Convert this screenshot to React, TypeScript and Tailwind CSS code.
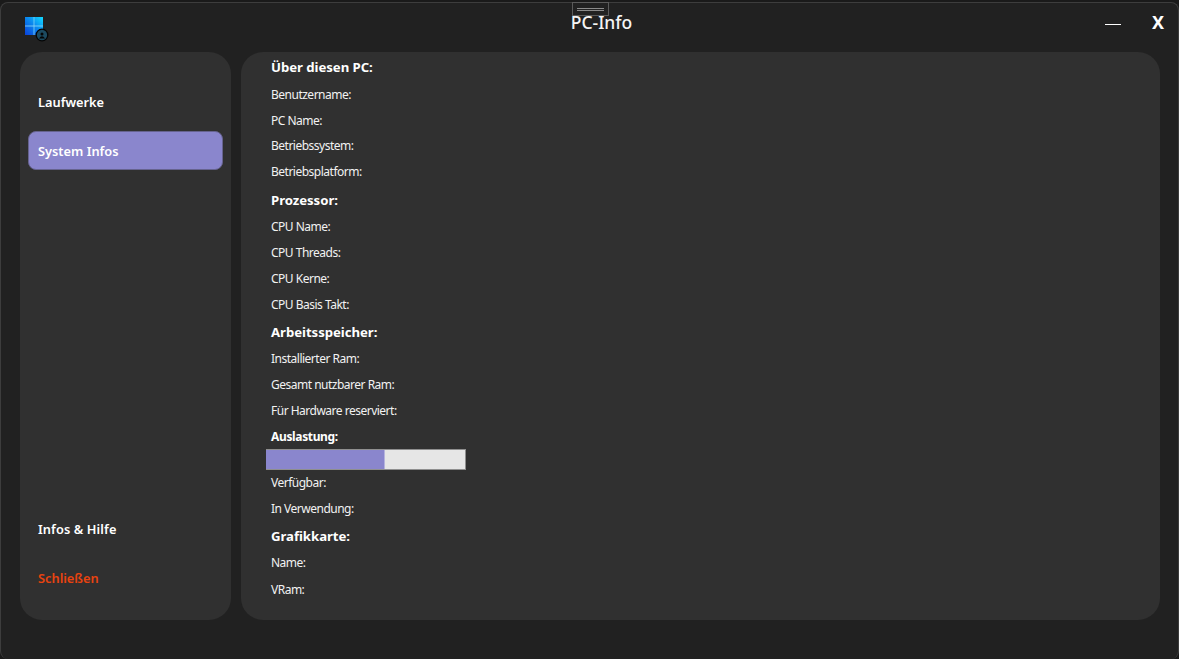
import React from "react";

const Head = ({ t, cls = "" }: { t: string; cls?: string }) => (
  <div className={`h-[26px] flex items-center text-[13.2px] font-bold tracking-[-0.05px] text-white ${cls}`}>{t}</div>
);
const Line = ({ t, cls = "h-[26px]" }: { t: string; cls?: string }) => (
  <div className={`flex items-center text-[12px] tracking-[-0.5px] text-[#f2f2f2] ${cls}`}>{t}</div>
);

const Logo = () => (
  <svg width="26" height="26" viewBox="0 0 26 26" className="block">
    <defs>
      <linearGradient id="w" x1="0" y1="1" x2="1" y2="0">
        <stop offset="0" stopColor="#0a3fd8" />
        <stop offset="0.55" stopColor="#0a8cf0" />
        <stop offset="1" stopColor="#12dcff" />
      </linearGradient>
    </defs>
    <rect x="1" y="1" width="18" height="18" fill="url(#w)" />
    <rect x="9.5" y="1" width="1" height="18" fill="#7fd4f5" opacity="0.8" />
    <rect x="1" y="9.5" width="18" height="1" fill="#8fd8f5" opacity="0.8" />
    <circle cx="18" cy="19" r="5.8" fill="#1c4a60" stroke="#050505" strokeWidth="1.3" />
    <circle cx="18" cy="18" r="1.5" fill="#050505" />
    <path d="M15 22.5 Q18 18 21 22.5 Z" fill="#050505" />
  </svg>
);

export default function App() {
  return (
    <div className="relative w-[1179px] h-[659px] overflow-hidden bg-[#1a1a1a] pt-[2px] font-['Noto_Sans','Open_Sans',sans-serif]">
      <div className="w-full h-[657px] rounded-[8px] border border-[#3d3d3d] border-b-0 bg-[#212121] flex flex-col">
        <div className="relative h-[49px] flex items-center shrink-0">
          <div className="absolute left-[23px] top-[13px]">
            <Logo />
          </div>
          <div className="absolute left-[571px] -top-px w-[37px] h-[14px] border border-[#5a5a5a] flex flex-col items-center justify-center gap-[1px]">
            <div className="w-[27px] h-px bg-[#8a8a8a]" />
            <div className="w-[27px] h-px bg-[#8a8a8a]" />
          </div>
          <div className="flex-1 text-center text-[17.5px] font-medium text-[#f5f5f5] pb-[12px] pl-[24px] pt-[2px]">PC-Info</div>
          <div className="absolute left-[1104px] top-[21px] w-[16px] h-px bg-white" />
          <div className="absolute left-[1151px] top-[6px] text-[18px] font-bold text-white">X</div>
        </div>
        <div className="flex gap-[10px] pl-[19px] h-[568px]">
          <aside className="w-[211px] h-full rounded-[22px] bg-[#303030] px-[8px] pt-[31px] pb-[22px] flex flex-col">
            <div className="h-[39px] pl-[10px] flex items-center text-[12.8px] font-semibold text-white">Laufwerke</div>
            <div className="mt-[9px] h-[39px] pl-[9px] pt-[2px] flex items-center rounded-[8px] bg-[#8a86cd] border border-[#66638f] text-[12.8px] font-semibold text-white">System Infos</div>
            <div className="mt-auto h-[39px] pl-[10px] flex items-center text-[12.8px] tracking-[0.1px] font-semibold text-white">Infos &amp; Hilfe</div>
            <div className="mt-[10px] h-[39px] pl-[10px] flex items-center text-[12.8px] font-semibold text-[#e8430f]">Schließen</div>
          </aside>
          <main className="w-[919px] h-full rounded-[22px] bg-[#303030] pl-[30px] pt-[3px] flex flex-col">
            <Head t="Über diesen PC:" />
            <div className="h-px" />
            <Line t="Benutzername:" />
            <Line t="PC Name:" cls="h-[25px]" />
            <Line t="Betriebssystem:" />
            <Line t="Betriebsplatform:" />
            <Head t="Prozessor:" cls="mt-[3px]" />
            <Line t="CPU Name:" />
            <Line t="CPU Threads:" />
            <Line t="CPU Kerne:" />
            <Line t="CPU Basis Takt:" />
            <div className="h-[2px]" />
            <Head t="Arbeitsspeicher:" />
            <Line t="Installierter Ram:" />
            <Line t="Gesamt nutzbarer Ram:" />
            <Line t="Für Hardware reserviert:" />
            <div className="h-[25px] flex items-center text-[12px] tracking-[-0.35px] font-bold text-white">Auslastung:</div>
            <div className="-ml-[5px] w-[200px] h-[21px] bg-[#e6e6e6] border border-[#8f8f8f] border-l-0 shrink-0">
              <div className="h-full w-[119px] bg-[#8a86cd] border-r border-[#b5b3dd]" />
            </div>
            <Line t="Verfügbar:" />
            <Line t="In Verwendung:" />
            <div className="h-[2px]" />
            <Head t="Grafikkarte:" />
            <Line t="Name:" />
            <div className="h-px" />
            <Line t="VRam:" />
          </main>
        </div>
      </div>
    </div>
  );
}
